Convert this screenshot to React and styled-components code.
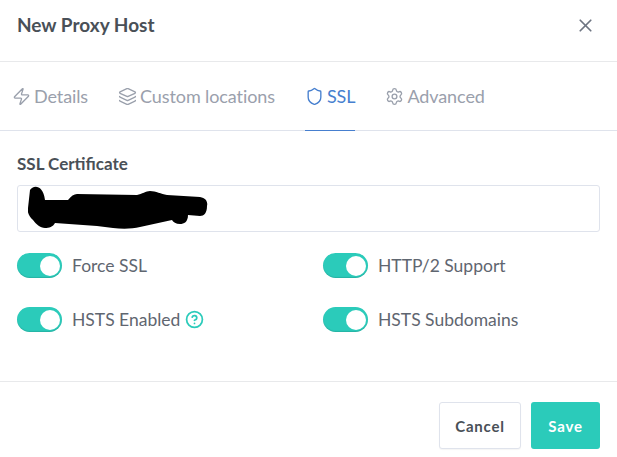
import React from 'react';
import styled, { createGlobalStyle } from 'styled-components';
import { Zap, Layers, Shield, Settings, X, CircleHelp } from 'lucide-react';

const GlobalStyle = createGlobalStyle`
    html, body {
        margin: 0;
        padding: 0;
        background: #fff;
    }
    body {
        font-family: 'Lato', 'Liberation Sans', sans-serif;
    }
`;

const tabs = [
    { label: 'Details', icon: Zap },
    { label: 'Custom locations', icon: Layers },
    { label: 'SSL', icon: Shield, active: true },
    { label: 'Advanced', icon: Settings },
];

const Switch = ({ label, children }) => (
    <SwitchRow>
        <Track>
            <Knob />
        </Track>
        <SwitchLabel>{label}</SwitchLabel>
        {children}
    </SwitchRow>
);

export default function App() {
    return (
        <Modal>
            <GlobalStyle />
            <Header>
                <Title>New Proxy Host</Title>
                <CloseButton>
                    <X size={21} strokeWidth={2} />
                </CloseButton>
            </Header>
            <TabBar>
                {tabs.map(({ label, icon: Icon, active }) => (
                    <Tab key={label} $active={active}>
                        <Icon size={19} strokeWidth={1.7} />
                        {label}
                    </Tab>
                ))}
            </TabBar>
            <Body>
                <FieldLabel>SSL Certificate</FieldLabel>
                <SelectBox>
                    <Scribble viewBox="0 0 180 45" aria-hidden="true">
                        <path
                            d="M2 5 C5 0 15 -1 17 15 L40 15 C43 11 46 9 49 9 L109 10 C114 9 118 6 122 6 C128 6 133 9 139 10 L172 12 C178 13 180 17 179 21 C179 28 176 31 172 31 L160 30 C160 37 156 39 152 39 C148 39 145 37 144 35 L112 42 C104 44 94 44 85 43 L69 41 L27 38 C25 42 21 43 17 43 C12 43 8 39 5 35 C1 31 -1 27 0 23 Z"
                            fill="#000"
                        />
                    </Scribble>
                </SelectBox>
                <SwitchGrid>
                    <Switch label="Force SSL" />
                    <Switch label="HTTP/2 Support" />
                    <Switch label="HSTS Enabled">
                        <HelpIcon>
                            <CircleHelp size={19} strokeWidth={2.2} />
                        </HelpIcon>
                    </Switch>
                    <Switch label="HSTS Subdomains" />
                </SwitchGrid>
            </Body>
            <Footer>
                <CancelButton>Cancel</CancelButton>
                <SaveButton>Save</SaveButton>
            </Footer>
        </Modal>
    );
}

const Modal = styled.div`
    width: 617px;
    height: 457px;
    display: flex;
    flex-direction: column;
    background: #fff;
    overflow: hidden;
`;

const Header = styled.div`
    height: 61px;
    box-sizing: content-box;
    padding: 0 21px 0 17px;
    display: flex;
    align-items: flex-start;
    justify-content: space-between;
    border-bottom: 1px solid rgba(110, 117, 130, 0.16);
`;

const Title = styled.div`
    margin-top: 13px;
    font-size: 19px;
    line-height: 24px;
    font-weight: 700;
    color: #495057;
`;

const CloseButton = styled.div`
    margin-top: 15px;
    display: flex;
    color: #6e7582;
`;

const TabBar = styled.div`
    height: 68px;
    padding-left: 12px;
    display: flex;
    gap: 30px;
    border-bottom: 1px solid #dfe3ec;
`;

const Tab = styled.div`
    height: 69px;
    box-sizing: border-box;
    display: flex;
    align-items: center;
    gap: 3px;
    font-size: 18px;
    letter-spacing: -0.1px;
    color: ${(p) => (p.$active ? '#467fcf' : '#9aa0ac')};
    border-bottom: 1px solid ${(p) => (p.$active ? '#467fcf' : 'transparent')};
`;

const Body = styled.div`
    height: 251px;
    box-sizing: border-box;
    padding: 22px 17px 0;
    border-bottom: 1px solid rgba(110, 117, 130, 0.16);
`;

const FieldLabel = styled.div`
    font-size: 17px;
    line-height: 22px;
    font-weight: 700;
    color: #495057;
`;

const SelectBox = styled.div`
    position: relative;
    margin-top: 10px;
    height: 47px;
    box-sizing: border-box;
    border: 1px solid #dfe3ec;
    border-radius: 3px;
`;

const Scribble = styled.svg`
    position: absolute;
    left: 10px;
    top: -1px;
    width: 180px;
    height: 45px;
`;

const SwitchGrid = styled.div`
    margin-top: 20px;
    display: grid;
    grid-template-columns: 306px 1fr;
    row-gap: 28px;
`;

const SwitchRow = styled.div`
    display: flex;
    align-items: center;
    height: 26px;
`;

const Track = styled.div`
    width: 45px;
    height: 25px;
    box-sizing: border-box;
    padding: 3px 2px 0 0;
    display: flex;
    justify-content: flex-end;
    align-items: flex-start;
    background: #2bcbba;
    border-radius: 13px;
    box-shadow: inset 0 -1px 1px rgba(0, 0, 0, 0.12);
`;

const Knob = styled.div`
    width: 20px;
    height: 20px;
    background: #fff;
    border-radius: 50%;
`;

const SwitchLabel = styled.span`
    margin-left: 10px;
    font-size: 17.5px;
    color: #5f6670;
`;

const HelpIcon = styled.span`
    display: flex;
    margin-left: 5px;
    color: #2bcbba;
`;

const Footer = styled.div`
    flex: 1;
    padding: 20px 17px 0;
    display: flex;
    justify-content: flex-end;
    align-items: flex-start;
    gap: 10px;
`;

const ActionButton = styled.div`
    height: 47px;
    box-sizing: border-box;
    display: flex;
    align-items: center;
    justify-content: center;
    border-radius: 3px;
    font-size: 15px;
    font-weight: 700;
    letter-spacing: 0.8px;
`;

const CancelButton = styled(ActionButton)`
    width: 82px;
    background: #fff;
    color: #495057;
    border: 1px solid #dfe3ec;
    box-shadow: 0 1px 1px rgba(0, 0, 0, 0.04);
`;

const SaveButton = styled(ActionButton)`
    width: 69px;
    background: #2bcbba;
    color: #fff;
`;
